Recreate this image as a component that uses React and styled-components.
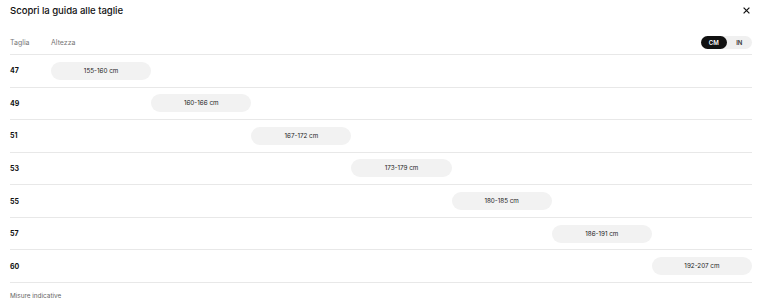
import styled, { createGlobalStyle } from 'styled-components';

const GlobalStyle = createGlobalStyle`
  html, body {
    margin: 0;
    padding: 0;
    background: #fff;
    font-family: Inter, "Liberation Sans", Arial, sans-serif;
    color: #111;
  }
`;

const Panel = styled.div`
  width: 770px;
  height: 303px;
  box-sizing: border-box;
  padding: 0 18px 0 10px;
  overflow: hidden;
`;

const TopBar = styled.div`
  height: 20px;
  display: flex;
  align-items: center;
  justify-content: space-between;
`;

const Title = styled.h2`
  margin: 0;
  font-size: 9.6px;
  font-weight: 500;
  letter-spacing: -0.05px;
  color: #111;
`;

const CloseButton = styled.button`
  border: 0;
  background: none;
  padding: 0;
  width: 10px;
  height: 10px;
  margin-right: 1px;
  display: flex;
  align-items: center;
  justify-content: center;
  cursor: pointer;
`;

const Table = styled.div`
  margin-top: 11px;
`;

const Row = styled.div`
  display: grid;
  grid-template-columns: 41px repeat(7, 1fr);
  align-items: center;
  height: ${(p) => (p.$head ? '24px' : '32.57px')};
  box-sizing: border-box;
  border-bottom: 1px solid #e8e8e8;
`;

const HeadCell = styled.div`
  font-size: 7px;
  color: #777;
`;

const ToggleCell = styled.div`
  grid-column: 8 / 9;
  display: flex;
  justify-content: flex-end;
`;

const Toggle = styled.div`
  display: flex;
  background: #f0f0f0;
  border-radius: 7px;
  height: 13px;
  width: 51px;
`;

const ToggleOption = styled.span`
  flex: 1;
  display: flex;
  align-items: center;
  justify-content: center;
  border-radius: 7px;
  font-size: 6px;
  font-weight: 600;
  background: ${(p) => (p.$active ? '#111' : 'transparent')};
  color: ${(p) => (p.$active ? '#fff' : '#333')};
`;

const SizeLabel = styled.div`
  font-size: 7px;
  font-weight: 700;
  color: #111;
`;

const Bar = styled.div`
  grid-column: ${(p) => p.$col} / span 1;
  height: 18px;
  border-radius: 9px;
  background: #f2f2f2;
  display: flex;
  align-items: center;
  justify-content: center;
  font-size: 6.3px;
  color: #1a1a1a;
`;

const Note = styled.div`
  padding-top: 9px;
  font-size: 6.4px;
  color: #666;
`;

const sizes = [
  { size: '47', range: '155-160 cm' },
  { size: '49', range: '160-166 cm' },
  { size: '51', range: '167-172 cm' },
  { size: '53', range: '173-179 cm' },
  { size: '55', range: '180-185 cm' },
  { size: '57', range: '186-191 cm' },
  { size: '60', range: '192-207 cm' },
];

const App = () => {
  return (
    <Panel>
      <GlobalStyle />
      <TopBar>
        <Title>Scopri la guida alle taglie</Title>
        <CloseButton aria-label="Chiudi">
          <svg width="7" height="7" viewBox="0 0 7 7">
            <path d="M0.6 0.6 L6.4 6.4 M6.4 0.6 L0.6 6.4" stroke="#111" strokeWidth="1.2" />
          </svg>
        </CloseButton>
      </TopBar>
      <Table>
        <Row $head>
          <HeadCell>Taglia</HeadCell>
          <HeadCell>Altezza</HeadCell>
          <ToggleCell>
            <Toggle>
              <ToggleOption $active>CM</ToggleOption>
              <ToggleOption>IN</ToggleOption>
            </Toggle>
          </ToggleCell>
        </Row>
        {sizes.map((s, i) => (
          <Row key={s.size}>
            <SizeLabel>{s.size}</SizeLabel>
            <Bar $col={i + 2}>{s.range}</Bar>
          </Row>
        ))}
      </Table>
      <Note>Misure indicative</Note>
    </Panel>
  );
};

export default App;
